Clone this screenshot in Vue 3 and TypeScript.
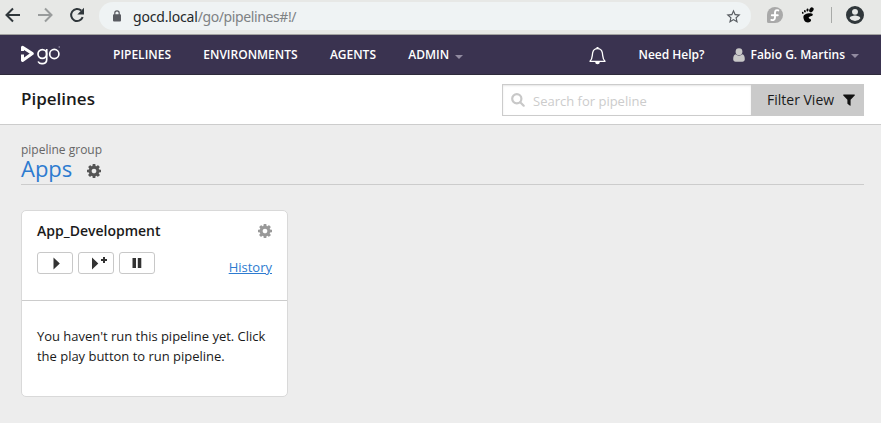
<script setup lang="ts">
interface NavItem {
  label: string
  menu?: boolean
}

const nav: NavItem[] = [
  { label: 'PIPELINES' },
  { label: 'ENVIRONMENTS' },
  { label: 'AGENTS' },
  { label: 'ADMIN', menu: true },
]

const cog =
  'M1024 896q0-106-75-181t-181-75-181 75-75 181 75 181 181 75 181-75 75-181zm512-109v222q0 12-8 23t-20 13l-185 28q-19 54-39 91 35 50 107 138 10 12 10 25t-9 23q-27 37-99 108t-94 71q-12 0-26-9l-138-108q-44 23-91 38-16 136-29 186-7 28-36 28h-222q-14 0-24.5-8.5t-11.5-21.5l-28-184q-49-16-90-37l-141 107q-10 9-25 9-14 0-25-11-126-114-165-168-7-10-7-23 0-12 8-23 15-21 51-66.5t54-70.5q-27-50-41-99l-183-27q-13-2-21-12.5t-8-23.5v-222q0-12 8-23t19-13l186-28q14-46 39-92-40-57-107-138-10-12-10-24 0-10 9-23 26-36 98.5-107.5t94.500-71.5q13 0 26 10l138 107q44-23 91-38 16-136 29-186 7-28 36-28h222q14 0 24.5 8.500t11.500 21.500l28 184q49 16 90 37l142-107q9-9 24-9 13 0 25 10 129 119 165 170 7 8 7 22 0 12-8 23-15 21-51 66.500t-54 70.500q26 50 41 98l183 28q13 2 21 12.500t8 23.500z'
</script>

<template>
  <div class="window">
    <div class="browser">
      <svg class="b-icon" viewBox="0 0 20 20"><path d="M17 10H4M10 3.500L3.500 10l6.500 6.500" /></svg>
      <svg class="b-icon faded" viewBox="0 0 20 20"><path d="M3 10h13M10 3.500l6.500 6.500-6.500 6.500" /></svg>
      <svg class="b-icon" viewBox="0 0 20 20">
        <path d="M15.700 12.200A6 6 0 1 1 14.200 5.600" />
        <path class="solid" d="M17 2.800v6.700h-6.700z" />
      </svg>
      <div class="address">
        <svg class="lock" viewBox="0 0 10 12">
          <rect x="1" y="4.300" width="8" height="7.200" rx="1" fill="#5a5c62" />
          <path d="M2.800 5V3a2.200 2.200 0 0 1 4.400 0v2" fill="none" stroke="#5a5c62" stroke-width="1.200" />
        </svg>
        <span class="url"><span class="host">gocd.local</span>/go/pipelines#!/</span>
        <svg class="star" viewBox="0 0 24 24">
          <path d="M22 9.240l-7.190-.62L12 2 9.190 8.630 2 9.240l5.460 4.730L5.820 21 12 17.270 18.180 21l-1.630-7.030L22 9.240zM12 15.400l-3.760 2.270 1-4.280-3.320-2.880 4.380-.38L12 6.100l1.710 4.040 4.380.38-3.320 2.880 1 4.280L12 15.400z" />
        </svg>
      </div>
      <svg class="ext" viewBox="0 0 16 16">
        <path d="M8 0a8 8 0 1 1 0 16H1.500A1.500 1.500 0 0 1 0 14.500V8a8 8 0 0 1 8-8z" fill="#a9a9a9" />
        <path d="M11.300 3.400C9.500 2.600 8 3.600 8 5.400v5.100c0 2-1.600 3-3.700 2.400M4.800 8.300h6" fill="none" stroke="#fff" stroke-width="1.900" stroke-linecap="round" />
      </svg>
      <svg class="foot" viewBox="0 0 14 16">
        <g fill="#050505">
          <ellipse cx="10.400" cy="2.900" rx="1.900" ry="2.700" transform="rotate(35 10.400 2.900)" />
          <ellipse cx="6.500" cy="3" rx="1.050" ry="1.600" transform="rotate(8 6.500 3)" />
          <ellipse cx="3.900" cy="4.200" rx=".9" ry="1.300" transform="rotate(-12 3.900 4.200)" />
          <ellipse cx="1.800" cy="5.800" rx=".8" ry="1.100" transform="rotate(-25 1.800 5.800)" />
          <path d="M9.800 6.300C6.500 6 2.400 7.200 2.400 9.900c0 2.400 1.400 5.500 4.400 5.500 2 0 3.300-1.100 3.300-2.400 0-1.500-2.400-.9-2.400-2.200 0-1.600 4.100-1.500 4.100-3.100 0-.8-.8-1.300-2-1.400z" />
        </g>
      </svg>
      <i class="divider"></i>
      <svg class="account" viewBox="2 2 20 20">
        <path d="M12 2a10 10 0 1 0 0 20 10 10 0 0 0 0-20zm0 3.200a3.300 3.300 0 1 1 0 6.600 3.300 3.300 0 0 1 0-6.600zm0 13.600a7.200 7.200 0 0 1-6-3.200c.1-2 4-3.100 6-3.100s5.900 1.100 6 3.100a7.200 7.200 0 0 1-6 3.200z" fill="#30373b" />
      </svg>
    </div>

    <header class="site">
      <svg class="logo" viewBox="0 0 42 22">
        <path d="M2.500 7V3.300L12.300 9.600 2.500 16.500V10.500" fill="none" stroke="#fff" stroke-width="3" stroke-linejoin="round" />
        <g fill="none" stroke="#fff" stroke-width="1.700">
          <circle cx="22.300" cy="10" r="4.300" />
          <path d="M26.700 5v10.400c0 5-7.100 5.400-8.600 2.100" />
          <circle cx="34.300" cy="10" r="4.600" />
        </g>
        <circle cx="39.200" cy="3" r=".7" fill="#aaa4bb" />
      </svg>
      <nav>
        <a v-for="item in nav" :key="item.label">{{ item.label }}<i v-if="item.menu" class="caret"></i></a>
      </nav>
      <svg class="bell" viewBox="0 0 17 19">
        <path d="M1 15.300c2.700-2.300 2-5.300 2.700-8.600.5-2.500 2-4 4.800-4s4.300 1.500 4.800 4c.7 3.300 0 6.300 2.700 8.600z" fill="none" stroke="#fff" stroke-width="1.300" stroke-linejoin="round" />
        <path d="M7.500 2.400V1h2v1.400M6.200 16h4.600a2.300 2.300 0 0 1-4.600 0z" fill="#fff" />
      </svg>
      <a class="help">Need Help?</a>
      <a class="user">
        <svg viewBox="0 0 12 14">
          <circle cx="6" cy="3.700" r="3.400" />
          <path d="M2.800 6.300C1 6.500.2 8.200.2 11.300c0 1.600 1 2.500 2.400 2.500h6.800c1.400 0 2.400-.9 2.400-2.500 0-3.100-.8-4.800-2.600-5-1.700 1.700-4.700 1.700-6.400 0z" />
        </svg>
        Fabio G. Martins<i class="caret"></i>
      </a>
    </header>

    <section class="page-head">
      <h1>Pipelines</h1>
      <div class="search">
        <svg viewBox="0 0 14 14"><circle cx="5.800" cy="5.800" r="4.600" /><path d="M9.200 9.200l3.500 3.500" /></svg>
        <span>Search for pipeline</span>
      </div>
      <button class="filter">
        Filter View
        <svg viewBox="0 0 12 12"><path d="M.7.500h10.600c.6 0 .8.600.4 1L7.600 5.700v5.500c0 .5-.5.700-.9.400L4.800 10c-.3-.2-.4-.4-.4-.7V5.700L.3 1.500C-.1 1.100.1.500.7.500z" /></svg>
      </button>
    </section>

    <main>
      <div class="group">
        <span class="kind">pipeline group</span>
        <h2>
          <a>Apps</a>
          <svg class="cog" viewBox="0 128 1536 1536"><path :d="cog" /></svg>
        </h2>
      </div>
      <article class="card">
        <div class="top">
          <div class="title">
            <h3>App_Development</h3>
            <svg class="cog light" viewBox="0 128 1536 1536"><path :d="cog" /></svg>
          </div>
          <div class="actions">
            <button><svg viewBox="0 0 34 20"><path d="M15.500 4.500v12l6.300-6z" /></svg></button>
            <button><svg viewBox="0 0 34 20"><path d="M13 4.500v12l6.300-6zM24 4h2v2h2v2h-2v2h-2V8h-2V6h2z" /></svg></button>
            <button><svg viewBox="0 0 34 20"><path d="M12.500 5H16v10h-3.500zM17.800 5h3.500v10h-3.500z" /></svg></button>
            <a class="history">History</a>
          </div>
        </div>
        <p>You haven't run this pipeline yet. Click<br />the play button to run pipeline.</p>
      </article>
    </main>
  </div>
</template>

<style>
body {
  margin: 0;
  background: #ededed;
}
</style>

<style scoped>
.window {
  width: 881px;
  height: 423px;
  overflow: hidden;
  background: #ededed;
  font-family: 'Open Sans', sans-serif;
  color: #1a1a1a;
}
.window *,
.window {
  box-sizing: border-box;
}
svg {
  display: block;
  flex: none;
}
button {
  font: inherit;
  padding: 0;
}
h1,
h2,
h3,
p {
  margin: 0;
}
.browser {
  height: 35px;
  display: flex;
  align-items: center;
  padding: 0 17px 4px 3px;
  background: #e7e8e6;
  border-bottom: 1px solid #a3a3a1;
}
.b-icon {
  width: 20px;
  height: 20px;
  margin-right: 12px;
  fill: none;
  stroke: #30373b;
  stroke-width: 2;
}
.b-icon .solid {
  fill: #30373b;
  stroke: none;
}
.b-icon.faded {
  stroke: #999c9c;
}
.address {
  width: 653px;
  height: 28px;
  margin-top: 2px;
  display: flex;
  align-items: center;
  padding: 0 9px 0 13px;
  border-radius: 14px;
  background: #eff3f4;
}
.lock {
  width: 10px;
  height: 12px;
}
.url {
  flex: 1;
  margin-left: 11px;
  font-family: 'Noto Sans', sans-serif;
  font-size: 14px;
  letter-spacing: -0.39px;
  color: #7e8284;
  white-space: nowrap;
}
.host {
  letter-spacing: -0.18px;
  color: #24282a;
}
.star {
  width: 17px;
  height: 17px;
  fill: #585c61;
}
.ext {
  width: 16px;
  height: 16px;
  margin-left: 16px;
}
.foot {
  width: 14px;
  height: 16px;
  margin-left: 18px;
}
.divider {
  width: 1px;
  height: 16px;
  margin-left: 16px;
  background: #a8aaa8;
}
.account {
  width: 18px;
  height: 18px;
  margin-left: 14px;
}
.site {
  height: 40px;
  display: flex;
  align-items: center;
  padding: 0 22px 0 20px;
  background: #3a3350;
  border-bottom: 1px solid #2e2b3b;
  color: #fff;
  font-size: 12px;
  font-weight: 600;
  white-space: nowrap;
}
.logo {
  width: 42px;
  height: 22px;
}
nav {
  display: flex;
  gap: 32.300px;
  margin-left: 51px;
}
.caret {
  display: inline-block;
  margin-left: 6px;
  border: 4px solid transparent;
  border-top-color: #918ba0;
  border-bottom: 0;
  vertical-align: 0;
}
.bell {
  width: 17px;
  height: 19px;
  margin-left: auto;
  margin-top: 2px;
}
.help {
  margin-left: 32px;
}
.user {
  display: flex;
  align-items: center;
  margin-left: 28px;
}
.user svg {
  width: 12px;
  height: 14px;
  margin: 1px 6px 0 0;
  fill: #c8c8c8;
}
.user .caret {
  margin-top: 2px;
}
.page-head {
  height: 50px;
  display: flex;
  align-items: center;
  padding: 0 17px 0 21px;
  background: #fff;
  border-bottom: 1px solid #ccc;
}
h1 {
  flex: 1;
  margin-top: -2px;
  font-size: 17px;
  font-weight: 600;
  line-height: 24px;
}
.search {
  width: 249px;
  height: 32px;
  display: flex;
  align-items: center;
  padding-left: 8px;
  border: 1px solid #ccc;
  border-right: 0;
  box-shadow: inset 0 1px 2px #0000001a;
  color: #ccc;
  font-size: 13px;
}
.search svg {
  width: 14px;
  height: 14px;
  margin-right: 8px;
  fill: none;
  stroke: #c8c8c8;
  stroke-width: 2.200;
  stroke-linecap: round;
}
.search span {
  padding-top: 2px;
}
.filter {
  width: 113px;
  height: 32px;
  display: flex;
  align-items: center;
  gap: 9px;
  padding-left: 16px;
  border: 0;
  background: #cacaca;
  color: #1a1a1a;
  font-size: 14px;
  white-space: nowrap;
}
.filter svg {
  width: 12px;
  height: 12px;
  margin-top: 1px;
  fill: #111;
}
main {
  padding: 16px 17px 0 21px;
}
.group {
  height: 44px;
  border-bottom: 1px solid #ccc;
}
.kind {
  display: block;
  font-size: 12px;
  line-height: 17px;
  color: #666;
}
h2 {
  display: flex;
  align-items: center;
  gap: 15px;
  margin-top: -2px;
  font-size: 22px;
  font-weight: 400;
  line-height: 24px;
}
h2 a {
  color: #2d7bd0;
}
.cog {
  width: 14px;
  height: 14px;
  fill: #555;
}
h2 .cog {
  margin-top: 5px;
}
.cog.light {
  fill: #999;
}
.card {
  width: 267px;
  height: 187px;
  margin-top: 25px;
  border: 1px solid #d9d9d9;
  border-radius: 5px;
  background: #fff;
}
.top {
  height: 90px;
  padding: 10px 15px 0;
  border-bottom: 1px solid #ccc;
}
.title {
  display: flex;
  justify-content: space-between;
  align-items: center;
}
h3 {
  font-size: 14px;
  font-weight: 600;
  line-height: 19px;
}
.actions {
  display: flex;
  gap: 5px;
  margin-top: 12px;
}
.actions button {
  width: 36px;
  height: 22px;
  border: 1px solid #c8c8c8;
  border-radius: 3px;
  background: #fff;
}
.actions svg {
  width: 34px;
  height: 20px;
  fill: #333;
}
.history {
  margin: 5px 0 0 auto;
  font-size: 13px;
  line-height: 20px;
  color: #2d7bd0;
  text-decoration: underline;
}
.card p {
  padding: 25px 15px 0;
  font-size: 13px;
  letter-spacing: -0.020px;
  line-height: 20px;
  white-space: nowrap;
}
</style>
